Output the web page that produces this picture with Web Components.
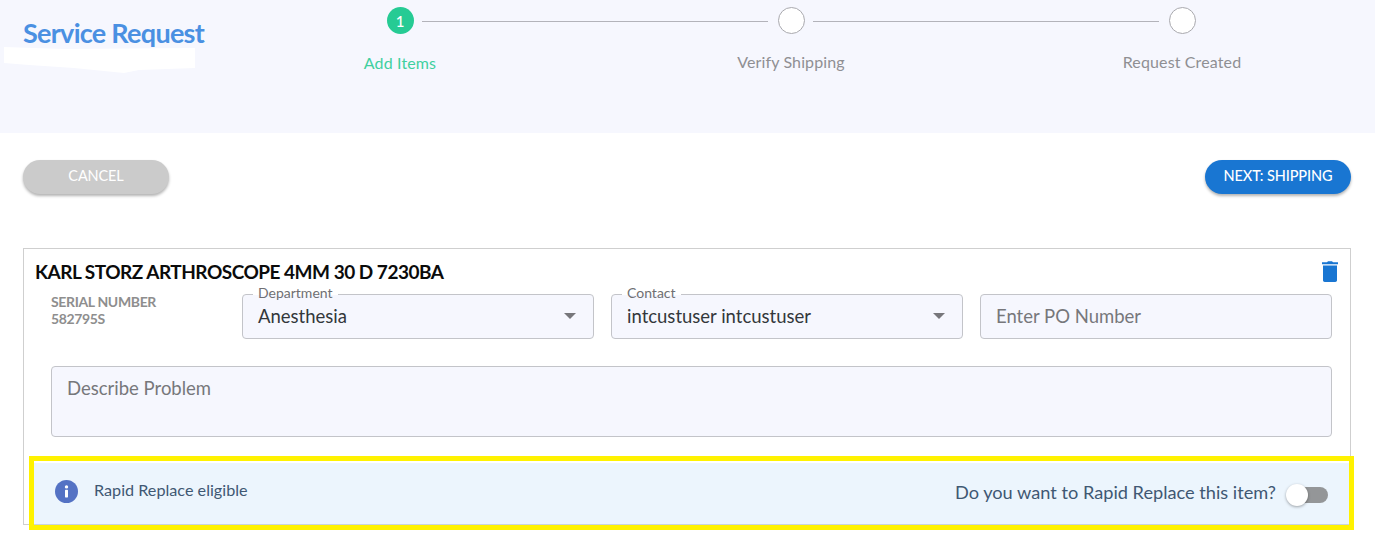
<!DOCTYPE html>
<html>
<head>
<meta charset="utf-8">
<title>Service Request</title>
<style>
  html, body { margin: 0; background: #fff; font-family: Lato, "Open Sans", sans-serif; }
  body { min-height: 544px; }
</style>
</head>
<body>
<request-header>
  <span slot="title">Service Request</span>
  <step-item state="active" number="1" label="Add Items"></step-item>
  <step-item label="Verify Shipping"></step-item>
  <step-item label="Request Created"></step-item>
</request-header>

<action-bar>
  <pill-button slot="start" kind="muted">CANCEL</pill-button>
  <pill-button slot="end" kind="primary">NEXT: SHIPPING</pill-button>
</action-bar>

<item-card>
  <span slot="title">KARL STORZ ARTHROSCOPE 4MM 30 D 7230BA</span>
  <serial-number slot="fields" value="582795S"></serial-number>
  <form-field slot="fields" label="Department" value="Anesthesia" select></form-field>
  <form-field slot="fields" label="Contact" value="intcustuser intcustuser" select></form-field>
  <form-field slot="fields" placeholder="Enter PO Number"></form-field>
  <form-field slot="problem" placeholder="Describe Problem" area></form-field>
  <rapid-banner slot="banner"></rapid-banner>
</item-card>

<script>
class RequestHeader extends HTMLElement {
  constructor () {
    super();
    this.attachShadow( { mode: 'open' } ).innerHTML = `
      <style>
        :host { display: block; height: 133px; background: #f6f7fe; box-sizing: border-box; }
        .wrap { display: flex; height: 100%; }
        .brand { width: 315px; flex: none; padding: 16px 0 0 23px; box-sizing: border-box; position: relative; }
        h1 {
          margin: 0; font-size: 27px; line-height: 34px; font-weight: 700;
          letter-spacing: -0.72px; color: #4a90e2;
        }
        svg { position: absolute; left: 4px; top: 46px; }
        .steps { display: flex; padding-top: 7px; }
      </style>
      <div class="wrap">
        <div class="brand">
          <h1><slot name="title"></slot></h1>
          <svg width="192" height="28" viewBox="0 0 192 28"><path fill="#fff" d="M0 1 L60 3 L191 2 L191 22 L135 24 L120 27 L70 22 L25 19 L0 17 Z"/></svg>
        </div>
        <div class="steps"><slot></slot></div>
      </div>`;
  }
}
customElements.define( 'request-header', RequestHeader );

class StepItem extends HTMLElement {
  constructor () {
    super();
    const active = this.getAttribute( 'state' ) === 'active';
    const number = this.getAttribute( 'number' ) || '';
    const label = this.getAttribute( 'label' );
    this.attachShadow( { mode: 'open' } ).innerHTML = `
      <style>
        :host { display: block; width: 170px; }
        :host(:not(:last-child)) { width: 391px; }
        .top { display: flex; align-items: center; height: 27px; }
        .dot {
          flex: none; width: 27px; height: 27px; border-radius: 50%; box-sizing: border-box;
          margin-left: 71.5px; display: flex; align-items: center; justify-content: center;
          font-size: 15px; font-weight: 500; color: #fff;
          background: ${ active ? '#26cb94' : '#fff' };
          border: ${ active ? '0' : '1px solid #a9a9ae' };
        }
        .line { flex: none; width: 346px; height: 1px; background: #b3b3ba; margin: 1px 0 0 8.5px; }
        :host(:last-child) .line { display: none; }
        .label {
          width: 170px; text-align: center; font-size: 16px; line-height: 20px; letter-spacing: 0.13px;
          margin-top: ${ active ? '19px' : '18px' };
          color: ${ active ? '#3fd09f' : '#8f8f93' };
        }
      </style>
      <div class="top"><div class="dot">${ number }</div><div class="line"></div></div>
      <div class="label">${ label }</div>`;
  }
}
customElements.define( 'step-item', StepItem );

class ActionBar extends HTMLElement {
  constructor () {
    super();
    this.attachShadow( { mode: 'open' } ).innerHTML = `
      <style>
        :host { display: flex; justify-content: space-between; padding: 27px 24px 54px 23px; }
      </style>
      <slot name="start"></slot><slot name="end"></slot>`;
  }
}
customElements.define( 'action-bar', ActionBar );

class PillButton extends HTMLElement {
  constructor () {
    super();
    const primary = this.getAttribute( 'kind' ) === 'primary';
    this.attachShadow( { mode: 'open' } ).innerHTML = `
      <style>
        :host {
          display: flex; align-items: center; justify-content: center;
          height: 34px; border-radius: 17px; box-sizing: border-box;
          width: 146px;
          padding-bottom: 3px;
          font-size: 14.5px; color: #fff;
          font-weight: ${ primary ? 500 : 400 };
          letter-spacing: -0.12px;
          background: ${ primary ? '#1976d2' : '#cbcbcb' };
          box-shadow: 0 2px 3px rgba( 0, 0, 0, 0.3 );
        }
      </style>
      <slot></slot>`;
  }
}
customElements.define( 'pill-button', PillButton );

class ItemCard extends HTMLElement {
  constructor () {
    super();
    this.attachShadow( { mode: 'open' } ).innerHTML = `
      <style>
        :host {
          display: block; margin: 0 24px 0 23px; height: 277px; box-sizing: border-box;
          border: 1px solid #cfcfcf; padding: 12px 0 0 11px;
        }
        .title { display: flex; justify-content: space-between; align-items: center; height: 22px; padding-right: 11px; }
        h2 { margin: 0; font-size: 19px; line-height: 22px; font-weight: 700; letter-spacing: -0.5px; color: #0b0b0b; }
        .fields { display: flex; gap: 17px; margin: 11px 0 0 16px; padding-right: 18px; }
        .problem { margin: 27px 0 0 16px; padding-right: 18px; }
        .banner { margin: 19px -4px 0 -6px; }
        ::slotted([slot="fields"]) { flex: none; }
      </style>
      <div class="title">
        <h2><slot name="title"></slot></h2>
        <svg width="18" height="22" viewBox="0 0 18 22"><path fill="#1976d2" d="M6 1.2 L7 0.3 L11 0.3 L12 1.2 L17 1.2 L17 3.2 L1 3.2 L1 1.2 Z M2 4.6 L16 4.6 L16 19.3 C16 20.3 15.2 21 14.3 21 L3.7 21 C2.8 21 2 20.3 2 19.3 Z"/></svg>
      </div>
      <div class="fields"><slot name="fields"></slot></div>
      <div class="problem"><slot name="problem"></slot></div>
      <div class="banner"><slot name="banner"></slot></div>`;
  }
}
customElements.define( 'item-card', ItemCard );

class SerialNumber extends HTMLElement {
  constructor () {
    super();
    this.attachShadow( { mode: 'open' } ).innerHTML = `
      <style>
        :host {
          display: block; width: 174px; margin-top: -1px;
          font-size: 14px; line-height: 17px; font-weight: 700; color: #8e8e8e; letter-spacing: -0.35px;
        }
      </style>
      <div>SERIAL NUMBER</div><div>${ this.getAttribute( 'value' ) }</div>`;
  }
}
customElements.define( 'serial-number', SerialNumber );

class FormField extends HTMLElement {
  constructor () {
    super();
    const label = this.getAttribute( 'label' );
    const value = this.getAttribute( 'value' );
    const placeholder = this.getAttribute( 'placeholder' );
    const select = this.hasAttribute( 'select' );
    const area = this.hasAttribute( 'area' );
    this.attachShadow( { mode: 'open' } ).innerHTML = `
      <style>
        :host { display: block; width: ${ area ? 'auto' : '352px' }; }
        .box {
          position: relative; box-sizing: border-box; height: ${ area ? '71px' : '45px' };
          background: #f6f7fe; border: 1px solid #c3c4c9; border-radius: 4px;
          display: flex; align-items: ${ area ? 'flex-start' : 'center' };
          justify-content: space-between; padding: ${ area ? '10px 15px' : '0 15px 2px' };
          font-size: 18.5px; line-height: 22px; color: #33373b;
        }
        .placeholder { color: #77777b; }
        .legend {
          position: absolute; left: 10px; top: -10px; padding: 0 5px;
          font-size: 14px; line-height: 16px; color: #6f6f73;
          background: linear-gradient( #fff 10px, #f6f7fe 10px );
        }
        .caret { width: 0; height: 0; border: 6px solid transparent; border-top-color: #77777b; border-bottom: 0; margin: 1px 2px 0 0; }
      </style>
      <div class="box">
        ${ label ? `<span class="legend">${ label }</span>` : '' }
        ${ value ? `<span>${ value }</span>` : `<span class="placeholder">${ placeholder }</span>` }
        ${ select ? '<span class="caret"></span>' : '' }
      </div>`;
  }
}
customElements.define( 'form-field', FormField );

class RapidBanner extends HTMLElement {
  constructor () {
    super();
    this.attachShadow( { mode: 'open' } ).innerHTML = `
      <style>
        :host { display: block; box-sizing: border-box; height: 74px; border: 5px solid #fff200; }
        .inner {
          display: flex; align-items: center; justify-content: space-between;
          box-sizing: border-box; height: 64px; border-top: 2px solid #fff; border-bottom: 1px solid #c9d4de;
          background: #ecf5fd; color: #3f5873; padding: 0 21px 6px 21px;
        }
        .left, .right { display: flex; align-items: center; }
        .left { font-size: 16.2px; }
        .left svg { margin: 1px 16px 0 0; }
        .left span { margin-bottom: 3px; }
        .right { font-size: 18.2px; padding-top: 2px; }
        .switch { position: relative; width: 34px; height: 16px; margin-left: 18px; transform: translateY( 3px ); background: #949698; border-radius: 8px; }
        .knob {
          position: absolute; left: -8px; top: -3px; width: 22px; height: 22px; border-radius: 50%;
          background: #fff; box-shadow: 0 1px 3px rgba( 0, 0, 0, 0.35 );
        }
      </style>
      <div class="inner">
        <div class="left">
          <svg width="23" height="23" viewBox="0 0 23 23">
            <circle cx="11.5" cy="11.5" r="11.5" fill="#5472c4"/>
            <rect x="10" y="9.8" width="3" height="7.6" rx="0.6" fill="#fff"/>
            <circle cx="11.5" cy="6.9" r="1.7" fill="#fff"/>
          </svg>
          <span>Rapid Replace eligible</span>
        </div>
        <div class="right">
          <span>Do you want to Rapid Replace this item?</span>
          <span class="switch"><span class="knob"></span></span>
        </div>
      </div>`;
  }
}
customElements.define( 'rapid-banner', RapidBanner );
</script>
</body>
</html>
